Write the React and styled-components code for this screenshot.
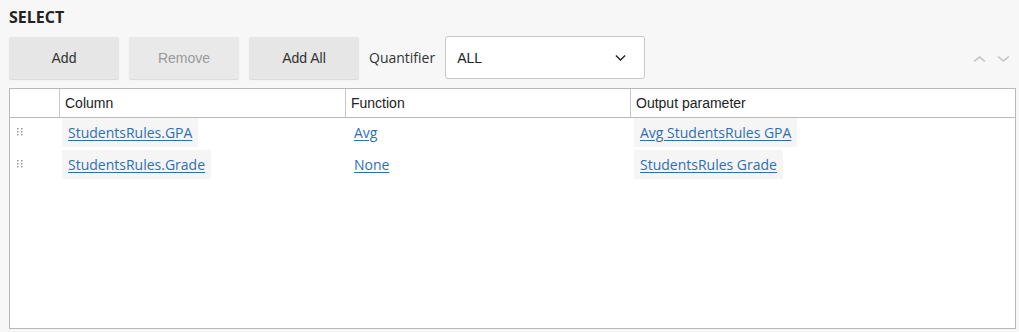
import React from "react";
import styled, { createGlobalStyle, css } from "styled-components";

const GlobalStyle = createGlobalStyle`
  html, body {
    margin: 0;
    padding: 0;
    background: #f7f7f7;
  }
`;

const Page = styled.section`
  width: 1019px;
  height: 332px;
  box-sizing: border-box;
  padding: 6px 3px 3px 9px;
  display: flex;
  flex-direction: column;
  font-family: "Open Sans", sans-serif;
  color: #333;
`;

const Title = styled.h2`
  margin: 0;
  font-size: 16px;
  font-weight: 700;
  line-height: 22px;
  color: #222;
`;

const Toolbar = styled.div`
  display: flex;
  align-items: center;
  gap: 10px;
  margin-top: 8px;
  height: 43px;
`;

const ToolButton = styled.button`
  width: 110px;
  height: 42px;
  border: none;
  border-radius: 2px;
  background: #e6e6e6;
  box-shadow: 0 1px 1px rgba(0, 0, 0, 0.12);
  font-family: "Liberation Sans", Arial, sans-serif;
  font-size: 14px;
  color: #333;
  cursor: pointer;

  ${props =>
    props.disabled &&
    css`
      color: #9a9a9a;
      background: #e9e9e9;
      cursor: default;
    `};
`;

const Label = styled.span`
  font-size: 14px;
  color: #333;
`;

const Select = styled.div`
  width: 200px;
  height: 43px;
  box-sizing: border-box;
  border: 1px solid #c8c8c8;
  border-radius: 3px;
  background: #fff;
  display: flex;
  align-items: center;
  justify-content: space-between;
  padding: 0 18px 0 11px;
  font-family: "Liberation Sans", Arial, sans-serif;
  font-size: 14px;
  color: #222;
`;

const Arrows = styled.div`
  margin-left: auto;
  margin-right: 6px;
  display: flex;
  gap: 11px;
  color: #c4c4c4;
  margin-top: 2px;
`;

const Grid = styled.div`
  margin-top: 9px;
  flex: 1;
  background: #fff;
  border: 1px solid #b9b9b9;
  display: flex;
  flex-direction: column;
`;

const Row = styled.div`
  display: grid;
  grid-template-columns: 49px 286px 285px 1fr;

  ${props =>
    props.head
      ? css`
          align-items: center;
          height: 28px;
          border-bottom: 1px solid #b9b9b9;
        `
      : css`
          align-items: start;
          box-sizing: border-box;
          height: 32px;
        `};
`;

const HeadCell = styled.div`
  height: 100%;
  display: flex;
  align-items: center;
  padding-left: 5px;
  font-family: "Liberation Sans", Arial, sans-serif;
  font-size: 14px;
  color: #222;
  border-left: ${props => (props.first ? "none" : "1px solid #c8c8c8")};
`;

const Cell = styled.div`
  display: flex;
  align-items: center;
  padding-left: ${props => (props.pad ? props.pad : 3)}px;
`;

const Handle = styled.div`
  padding-left: 7px;
  height: 28px;
  display: flex;
  align-items: center;
`;

const Chip = styled.span`
  display: inline-block;
  padding: 3px 6px 4px;
  background: ${props => (props.plain ? "transparent" : "#f5f5f5")};
`;

const Link = styled.a`
  font-size: 14px;
  color: #2d6fb7;
  text-decoration: underline;
  text-underline-offset: 2px;
  cursor: pointer;
`;

const Dots = () => (
  <svg width="6" height="9" viewBox="0 0 6 9">
    {[0, 3, 6].map(y =>
      [0, 4].map(x => (
        <rect key={`${x}-${y}`} x={x} y={y} width="1.5" height="1.5" fill="#9a9a9a" />
      ))
    )}
  </svg>
);

const Chevron = ({ up, color = "currentColor", w = 13 }) => (
  <svg width={w} height="8" viewBox="0 0 12 8" preserveAspectRatio="none">
    <path
      d={up ? "M1 6.5 L6 2 L11 6.5" : "M1 1.5 L6 6 L11 1.5"}
      fill="none"
      stroke={color}
      strokeWidth="1.6"
    />
  </svg>
);

const rows = [
  { column: "StudentsRules.GPA", fn: "Avg", output: "Avg StudentsRules GPA" },
  { column: "StudentsRules.Grade", fn: "None", output: "StudentsRules Grade" }
];

export default function App() {
  return (
    <>
      <GlobalStyle />
      <Page>
        <Title>SELECT</Title>
        <Toolbar>
          <ToolButton>Add</ToolButton>
          <ToolButton disabled>Remove</ToolButton>
          <ToolButton>Add All</ToolButton>
          <Label>Quantifier</Label>
          <Select>
            ALL
            <Chevron color="#222" w={11} />
          </Select>
          <Arrows>
            <Chevron up />
            <Chevron />
          </Arrows>
        </Toolbar>
        <Grid>
          <Row head>
            <HeadCell first />
            <HeadCell>Column</HeadCell>
            <HeadCell>Function</HeadCell>
            <HeadCell>Output parameter</HeadCell>
          </Row>
          {rows.map(r => (
            <Row key={r.column}>
              <Handle>
                <Dots />
              </Handle>
              <Cell pad={3}>
                <Chip>
                  <Link>{r.column}</Link>
                </Chip>
              </Cell>
              <Cell pad={3}>
                <Chip plain>
                  <Link>{r.fn}</Link>
                </Chip>
              </Cell>
              <Cell pad={4}>
                <Chip>
                  <Link>{r.output}</Link>
                </Chip>
              </Cell>
            </Row>
          ))}
        </Grid>
      </Page>
    </>
  );
}
